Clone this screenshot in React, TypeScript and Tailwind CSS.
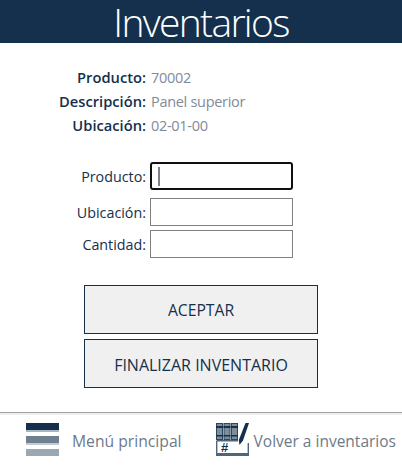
const font = "font-['Open_Sans','Noto_Sans',sans-serif]";

function MenuIcon() {
  return (
    <svg width="33" height="33" viewBox="0 0 33 33" className="shrink-0">
      <rect x="0" y="0" width="33" height="7" fill="#14304d" />
      <rect x="0" y="7" width="33" height="2" fill="#a9b5c0" />
      <rect x="0" y="13" width="33" height="7" fill="#6f8090" />
      <rect x="0" y="20" width="33" height="2" fill="#c3cbd3" />
      <rect x="0" y="26" width="33" height="7" fill="#9aa8b4" />
    </svg>
  );
}

function InventoryIcon() {
  return (
    <svg width="33" height="33" viewBox="0 0 33 33" className="shrink-0">
      <g fill="#7d8e9d" stroke="#2c4660" strokeWidth="1">
        <rect x="0.5" y="0.5" width="6" height="16" />
        <rect x="8" y="0.5" width="6" height="16" />
        <rect x="15.5" y="0.5" width="6" height="16" />
      </g>
      <g fill="#14304d">
        <rect x="0" y="3" width="7" height="2" />
        <rect x="7.5" y="3" width="7" height="2" />
        <rect x="15" y="3" width="7" height="2" />
        <rect x="0" y="12" width="7" height="1.5" />
        <rect x="7.5" y="12" width="7" height="1.5" />
        <rect x="15" y="12" width="7" height="1.5" />
      </g>
      <path d="M0.7 17.7H22M32.3 20V32H0.7V17.7" fill="none" stroke="#4d667c" strokeWidth="1.4" />
      <rect x="0" y="30" width="33" height="3" fill="#4d667c" />
      <path d="M29.5 0H33L27 17.5 23.5 22 22.8 17z" fill="#14304d" />
      <text x="5" y="29" fontSize="13" fontWeight="800" fill="#14304d" fontFamily="Liberation Sans, sans-serif">#</text>
    </svg>
  );
}

function Info({ label, value }: { label: string; value: string }) {
  return (
    <div className="flex h-6 items-center">
      <div className="w-[146px] text-right text-[14.7px] leading-[23px] font-semibold text-[#14304d]">{label}</div>
      <div className="ml-[5px] text-[14.5px] leading-[23px] tracking-[-0.3px] text-[#828a96]">{value}</div>
    </div>
  );
}

function Field({ label, focused }: { label: string; focused?: boolean }) {
  return (
    <div className="flex items-center">
      <label className="mt-[2px] w-[146px] text-right text-[14.3px] text-[#14304d]">{label}</label>
      {focused ? (
        <div className="ml-[4px] flex h-7 w-[143px] items-center rounded-[3px] border-2 border-[#101010] bg-white pl-[6px]">
          <div className="h-[19px] w-[2px] bg-[#808080]" />
        </div>
      ) : (
        <input className="ml-[4px] h-7 w-[143px] border border-[#808080] bg-white" />
      )}
    </div>
  );
}

export default function App() {
  return (
    <div className={`${font} flex h-[473px] w-[402px] flex-col overflow-hidden bg-white`}>
      <header className="flex h-[43px] items-center justify-center bg-[#14304d] text-[39px] leading-[43px] font-light tracking-[-1.7px] text-white">
        Inventarios
      </header>
      <section className="mt-[22px] flex flex-col">
        <Info label="Producto:" value="70002" />
        <Info label="Descripción:" value="Panel superior" />
        <Info label="Ubicación:" value="02-01-00" />
      </section>
      <section className="mt-[25px] flex flex-col">
        <Field label="Producto:" focused />
        <div className="mt-2"><Field label="Ubicación:" /></div>
        <div className="mt-1"><Field label="Cantidad:" /></div>
      </section>
      <section className="ml-[84px] mt-[27px] flex w-[234px] flex-col gap-[5px]">
        <button className="h-[49px] border border-[#14304d] bg-[#f0f0f0] pt-[2px] text-[15.7px] text-[#14304d]">ACEPTAR</button>
        <button className="h-[49px] border border-[#14304d] bg-[#f0f0f0] pt-[2px] text-[16px] text-[#14304d]">FINALIZAR INVENTARIO</button>
      </section>
      <footer className="mt-[24px] flex flex-1 border-t border-t-[#a0a0a0] pl-[26px] pt-[10px] shadow-[inset_0_2px_0_#eeeeee]">
        <div className="flex h-[33px] items-center">
          <MenuIcon />
          <span className="ml-[13px] mt-[5px] whitespace-nowrap text-[15.7px] text-[#6d7a88]">Menú principal</span>
        </div>
        <div className="ml-[34px] flex h-[33px] items-center">
          <InventoryIcon />
          <span className="ml-[5px] mt-[5px] whitespace-nowrap text-[15.5px] text-[#6d7a88]">Volver a inventarios</span>
        </div>
      </footer>
    </div>
  );
}
